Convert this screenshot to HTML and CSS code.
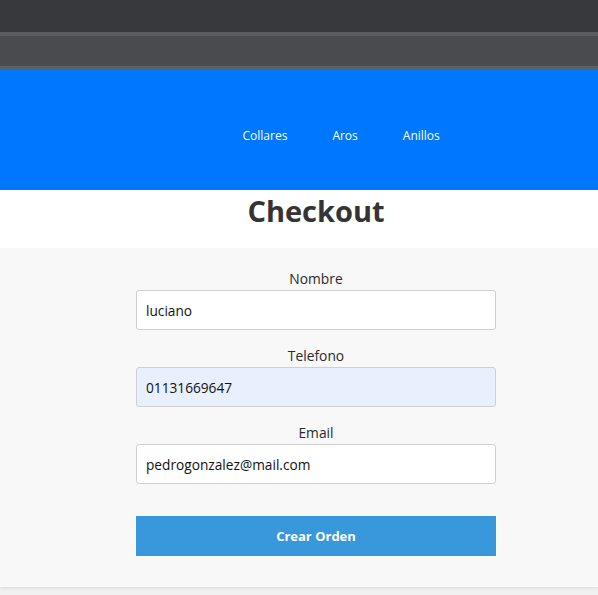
FILE: index.html
```html
<!DOCTYPE html>
<html lang="es">
<head>
<meta charset="utf-8">
<title>Checkout</title>
<link rel="stylesheet" href="styles.css">
</head>
<body>
<div class="chrome">
  <div class="chrome-top"></div>
  <div class="chrome-line"></div>
  <div class="chrome-mid"></div>
  <div class="chrome-line2"></div>
</div>
<nav class="navbar">
  <ul class="nav-list">
    <li><a class="nav-link" href="#">Collares</a></li>
    <li><a class="nav-link" href="#">Aros</a></li>
    <li><a class="nav-link" href="#">Anillos</a></li>
  </ul>
</nav>
<header class="title-wrap">
  <h1 class="title">Checkout</h1>
</header>
<main class="checkout">
  <form class="form">
    <div class="field">
      <label class="label" for="nombre">Nombre</label>
      <input class="input" id="nombre" type="text" value="luciano">
    </div>
    <div class="field">
      <label class="label" for="telefono">Telefono</label>
      <input class="input input-filled" id="telefono" type="text" value="01131669647">
    </div>
    <div class="field">
      <label class="label" for="email">Email</label>
      <input class="input" id="email" type="text" value="pedrogonzalez@mail.com">
    </div>
    <button class="btn" type="button">Crear Orden</button>
  </form>
</main>
<div class="footer-space"></div>
</body>
</html>
```

FILE: styles.css
```css
* { box-sizing: border-box; }
html, body { margin: 0; padding: 0; }
body {
  font-family: "Open Sans", "Noto Sans", sans-serif;
  color: #212529;
  background: #f1f1f1;
  height: 595px;
  overflow: hidden;
}
.chrome-top { height: 32px; background: #38393d; }
.chrome-line { height: 4px; background: #5b5c60; }
.chrome-mid { height: 30px; background: #4a4b4f; }
.chrome-line2 { height: 4px; background: #5f6064; }

.navbar {
  height: 120px;
  background: #0077ff;
  display: flex;
  align-items: center;
  padding: 10px 0 0 220px;
}
.nav-list {
  list-style: none;
  margin: 0;
  padding: 0;
  display: flex;
}
.nav-link {
  display: block;
  padding: 0 22.5px;
  color: #ffffff;
  font-size: 12px;
  text-decoration: none;
}

.title-wrap {
  height: 58px;
  background: #ffffff;
  display: flex;
  justify-content: center;
}
.title {
  margin: 0;
  font-size: 29px;
  font-weight: 700;
  color: #343434;
  line-height: 42px;
  padding-left: 34px;
}

.checkout {
  background: #f8f8f8;
  height: 339px;
  padding: 22px 0 0 34px;
  box-shadow: 0 2px 2px rgba(0,0,0,0.06);
  display: flex;
  justify-content: center;
}
.form {
  width: 360px;
  display: flex;
  flex-direction: column;
}
.field {
  display: flex;
  flex-direction: column;
  align-items: center;
  margin-bottom: 17px;
}
.label {
  font-size: 13.8px;
  line-height: 18px;
  color: #2a2a2a;
  margin-bottom: 2px;
}
.input {
  width: 100%;
  height: 40px;
  border: 1px solid #cfcfcf;
  border-radius: 3px;
  background: #ffffff;
  padding: 0 9px;
  font-family: inherit;
  font-size: 13.7px;
  color: #111;
}
.input-filled { background: #e8f0fe; }
.btn {
  margin-top: 15px;
  height: 40px;
  width: 100%;
  border: none;
  background: #3898db;
  color: #ffffff;
  font-family: inherit;
  font-weight: 700;
  font-size: 13px;
}
.footer-space { height: 10px; }
```
